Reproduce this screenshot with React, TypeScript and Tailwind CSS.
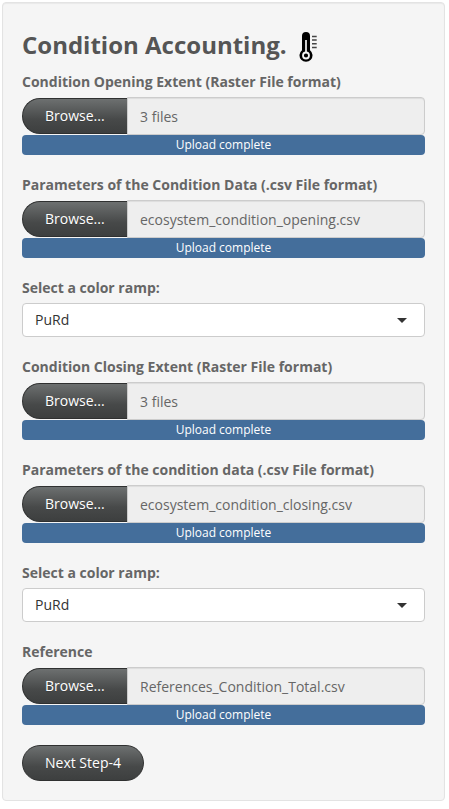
const BUTTON =
  "bg-[linear-gradient(#6d7070,#474949_60%,#3d3f3f)] border-[#2f3030] text-white text-sm leading-5 whitespace-nowrap [text-shadow:0_1px_0_rgba(0,0,0,0.15)]";

function Thermometer() {
  return (
    <svg width="20" height="32" viewBox="0 0 20 32" className="ml-[11px] mt-[9px] shrink-0" aria-hidden="true">
      <path
        fill="#000"
        d="M4 5a4 4 0 0 1 8 0v14.2a6.5 6.5 0 1 1-8 0z"
      />
      <path d="M8 9v13" stroke="#f5f5f5" strokeWidth="1.7" />
      <circle cx="8" cy="24.5" r="3" fill="none" stroke="#f5f5f5" strokeWidth="1.8" />
      <path d="M14 5.6h4.7M14 9.1h4.7M14 12.7h4.7M14 16.4h4.7" stroke="#444" strokeWidth="1.5" />
    </svg>
  );
}

function FileField({ label, value }: { label: string; value: string }) {
  return (
    <div className="mb-5">
      <label className="mb-[5px] block font-bold leading-5">{label}</label>
      <div className="flex h-[38px] items-center">
        <button className={`${BUTTON} h-9 w-[105px] rounded-l-[18px] border border-r-0 pl-[22px] text-left`}>
          Browse...
        </button>
        <div className="h-[38px] flex-1 rounded-r border border-[#ccc] bg-[#eee] pl-3 pt-[9px] leading-5 shadow-[inset_0_1px_1px_rgba(0,0,0,0.075)] text-[#666]">
          {value}
        </div>
      </div>
      <div className="h-5 rounded bg-[#446e9b] text-center text-xs leading-5 text-white">Upload complete</div>
    </div>
  );
}

function SelectField({ label, value }: { label: string; value: string }) {
  return (
    <div className="mb-5">
      <label className="mb-[5px] block font-bold leading-5">{label}</label>
      <div className="flex h-[34px] items-center justify-between rounded border border-[#ccc] bg-white pl-3 pr-[17px] text-[#333]">
        <span>{value}</span>
        <svg width="10" height="5" viewBox="0 0 10 5" aria-hidden="true">
          <path d="M0 0h10L5 5z" fill="#333" />
        </svg>
      </div>
    </div>
  );
}

export default function App() {
  return (
    <div className="h-[809px] bg-white pl-[2px] pt-[2px] font-['Open_Sans',sans-serif] text-sm leading-5 text-[#666]">
      <div className="h-[799px] w-[443px] rounded border border-[#e3e3e3] bg-[#f5f5f5] p-[19px] shadow-[inset_0_1px_1px_rgba(0,0,0,0.05)]">
        <div className="flex h-[50px] items-start">
          <h3 className="pt-[10px] text-2xl font-bold leading-[26px] text-[#555]">Condition Accounting.</h3>
          <Thermometer />
        </div>
        <FileField label="Condition Opening Extent (Raster File format)" value="3 files" />
        <FileField label="Parameters of the Condition Data (.csv File format)" value="ecosystem_condition_opening.csv" />
        <SelectField label="Select a color ramp:" value="PuRd" />
        <FileField label="Condition Closing Extent (Raster File format)" value="3 files" />
        <FileField label="Parameters of the condition data (.csv File format)" value="ecosystem_condition_closing.csv" />
        <SelectField label="Select a color ramp:" value="PuRd" />
        <FileField label="Reference" value="References_Condition_Total.csv" />
        <button className={`${BUTTON} h-9 w-[122px] rounded-[18px] border pl-[22px] text-left`}>Next Step-4</button>
      </div>
    </div>
  );
}
